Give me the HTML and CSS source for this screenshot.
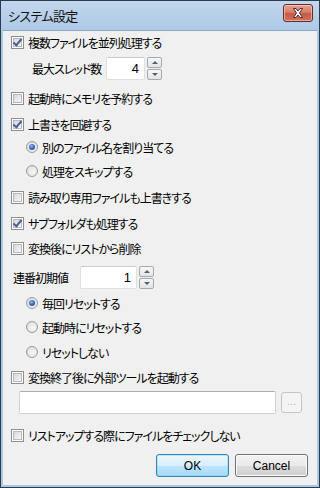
FILE: index.html
```html
<!DOCTYPE html>
<html lang="ja">
<head>
<meta charset="utf-8">
<link rel="stylesheet" href="styles.css">
</head>
<body>
<div class="window">
  <div class="titlebar">
    <span class="title">システム設定</span>
    <span class="close">
      <svg width="30" height="18" viewBox="0 0 30 18">
        <path d="M10.5 4.5 L13 4.5 L15 7 L17 4.5 L19.5 4.5 L16.5 9 L19.5 13.5 L17 13.5 L15 11 L13 13.5 L10.5 13.5 L13.5 9 Z" fill="#fff" stroke="#5a2a25" stroke-width="1" stroke-linejoin="round"/>
      </svg>
    </span>
  </div>
  <div class="content">
    <label class="row r1"><span class="cb checked"></span>複数ファイルを並列処理する</label>
    <div class="row r2 sub">
      <span class="lbl">最大スレッド数</span>
      <span class="num w-thread">4</span>
      <span class="spin"><span class="sb up"></span><span class="sb down"></span></span>
    </div>
    <label class="row r3"><span class="cb"></span>起動時にメモリを予約する</label>
    <label class="row r4"><span class="cb checked"></span>上書きを回避する</label>
    <label class="row r5 ind"><span class="rb on"></span>別のファイル名を割り当てる</label>
    <label class="row r6 ind"><span class="rb"></span>処理をスキップする</label>
    <label class="row r7"><span class="cb"></span>読み取り専用ファイルも上書きする</label>
    <label class="row r8"><span class="cb checked"></span>サブフォルダも処理する</label>
    <label class="row r9"><span class="cb"></span>変換後にリストから削除</label>
    <div class="row r10">
      <span class="lbl2">連番初期値</span>
      <span class="num w-seq">1</span>
      <span class="spin"><span class="sb up"></span><span class="sb down"></span></span>
    </div>
    <label class="row r11 ind"><span class="rb on"></span>毎回リセットする</label>
    <label class="row r12 ind"><span class="rb"></span>起動時にリセットする</label>
    <label class="row r13 ind"><span class="rb"></span>リセットしない</label>
    <label class="row r14"><span class="cb"></span>変換終了後に外部ツールを起動する</label>
    <div class="row r15 pathrow">
      <span class="pathbox"></span>
      <span class="browse">...</span>
    </div>
    <label class="row r16"><span class="cb"></span>リストアップする際にファイルをチェックしない</label>
    <div class="buttons">
      <span class="btn default">OK</span>
      <span class="btn">Cancel</span>
    </div>
  </div>
</div>
</body>
</html>
```
FILE: styles.css
```css
html, body {
  margin: 0;
  padding: 0;
  background: #fff;
}
.window {
  width: 320px;
  height: 488px;
  box-sizing: border-box;
  border: 1px solid #2a3b4c;
  background: #a9c8e6;
  padding: 0 2px 2px 2px;
  display: flex;
  flex-direction: column;
  font-family: "Noto Sans CJK JP", sans-serif;
  font-feature-settings: "palt";
  font-size: 12px;
  letter-spacing: -1px;
  color: #000;
}
.titlebar {
  height: 29px;
  flex: none;
  display: flex;
  align-items: center;
  justify-content: space-between;
  background: linear-gradient(#c3d7ee, #b7cfe9 50%, #aecae8);
  margin: 0 -2px;
  padding: 0 6px 0 7px;
}
.title {
  font-size: 13px;
  letter-spacing: -0.6px;
  color: #111;
  margin-top: -1px;
}
.close {
  width: 30px;
  height: 18px;
  margin-top: -5px;
  box-sizing: border-box;
  border: 1px solid #6b2a22;
  border-radius: 3px;
  background: linear-gradient(#e5a394, #d77c6a 45%, #c35a45 55%, #cf7560);
  box-shadow: inset 0 0 0 1px rgba(255,230,220,0.5);
  display: flex;
  align-items: center;
  justify-content: center;
}
.close svg { display: block; margin: -1px; }
.content {
  flex: 1;
  background: #f0f0f0;
  border-top: 1px solid #8da9c6;
  padding: 0 0 0 8px;
  display: flex;
  flex-direction: column;
}
.row {
  height: 20px;
  flex: none;
  display: flex;
  align-items: center;
  white-space: nowrap;
}
.r1 { margin-top: 1px; }
.r2 { margin-top: 5px; height: 23px; }
.r3 { margin-top: 8px; }
.r4 { margin-top: 6px; }
.r5 { margin-top: 3px; }
.r6 { margin-top: 4px; }
.r7 { margin-top: 6px; }
.r8 { margin-top: 6px; }
.r9 { margin-top: 5px; }
.r10 { margin-top: 8px; height: 23px; }
.r11 { margin-top: 4px; }
.r12 { margin-top: 4px; }
.r13 { margin-top: 5px; }
.r14 { margin-top: 5px; }
.r15 { margin-top: 4px; height: 23px; }
.r16 { margin-top: 11px; }
.ind { padding-left: 15px; }
.cb {
  width: 13px;
  height: 13px;
  box-sizing: border-box;
  border: 1px solid #8f8f8f;
  background: #fff;
  margin-right: 4px;
  flex: none;
  position: relative;
}
.cb::before {
  content: "";
  position: absolute;
  left: 1px; top: 1px; right: 1px; bottom: 1px;
  border: 1px solid #b7bcc2;
  background: linear-gradient(135deg, #d8d8d8, #f6f6f6);
}
.cb.checked::after {
  content: "";
  position: absolute;
  left: 3px;
  top: 0px;
  width: 3px;
  height: 7px;
  border-right: 2px solid #4b5f92;
  border-bottom: 2px solid #4b5f92;
  transform: rotate(40deg);
}
.rb {
  width: 12px;
  height: 12px;
  box-sizing: border-box;
  border-radius: 50%;
  border: 1px solid #9a9a9a;
  background: radial-gradient(circle at 60% 60%, #f8f8f8, #d7d7d7);
  margin-right: 4px;
  flex: none;
  position: relative;
}
.rb.on::after {
  content: "";
  position: absolute;
  left: 2px; top: 2px;
  width: 6px; height: 6px;
  border-radius: 50%;
  background: radial-gradient(circle at 40% 35%, #8fb8ec, #2457a8 65%, #1c3f7e);
}
.sub { padding-left: 21px; }
.lbl { width: 74px; }
.lbl2 { width: 67px; padding-left: 2px; }
.num {
  height: 23px;
  box-sizing: border-box;
  border: 1px solid #dcdfe3;
  border-top-color: #c6cbd1;
  border-radius: 2px;
  background: #fff;
  display: flex;
  align-items: center;
  justify-content: flex-end;
  padding-right: 5px;
  font-family: "Liberation Sans", sans-serif;
  font-size: 13px;
  letter-spacing: 0;
}
.w-thread { width: 39px; }
.w-seq { width: 57px; }
.spin {
  display: flex;
  flex-direction: column;
  gap: 1px;
  margin-left: 2px;
}
.sb {
  width: 15px;
  height: 11px;
  box-sizing: border-box;
  border: 1px solid #a8a8a8;
  border-radius: 2px;
  background: linear-gradient(#f7f7f7, #e4e4e4);
  position: relative;
}
.sb::after {
  content: "";
  position: absolute;
  left: 4px;
  width: 0; height: 0;
  border-left: 3px solid transparent;
  border-right: 3px solid transparent;
}
.sb.up::after { top: 3px; border-bottom: 3px solid #4d6185; }
.sb.down::after { top: 3px; border-top: 3px solid #4d6185; }
.pathrow { padding-left: 8px; }
.pathbox {
  width: 257px;
  height: 23px;
  box-sizing: border-box;
  border: 1px solid #cfd3d8;
  border-top-color: #abadb3;
  border-radius: 2px;
  background: #fff;
}
.browse {
  width: 21px;
  height: 21px;
  margin-left: 5px;
  box-sizing: border-box;
  border: 1px solid #c6c6c6;
  border-radius: 3px;
  background: #f4f4f4;
  color: #b5b5c5;
  font-family: "Liberation Sans", sans-serif;
  font-size: 11px;
  letter-spacing: 0;
  display: flex;
  align-items: center;
  justify-content: center;
  line-height: 1;
  padding-bottom: 2px;
}
.buttons {
  display: flex;
  justify-content: flex-end;
  gap: 6px;
  margin-top: 9px;
  padding-right: 9px;
}
.btn {
  width: 73px;
  height: 23px;
  box-sizing: border-box;
  border: 1px solid #707070;
  border-radius: 3px;
  background: linear-gradient(#f2f2f2, #ebebeb 50%, #dddddd 50%, #cfcfcf);
  box-shadow: inset 0 0 0 1px #fcfcfc;
  display: flex;
  align-items: center;
  justify-content: center;
  font-family: "Liberation Sans", sans-serif;
  font-size: 12px;
  letter-spacing: 0;
  color: #000;
}
.btn.default {
  border-color: #3c7fb1;
  background: linear-gradient(#eaf6fd, #d9f0fc 50%, #bee6fd 50%, #a7d9f5);
  box-shadow: inset 0 0 0 1px #48d7fb55;
}
```
